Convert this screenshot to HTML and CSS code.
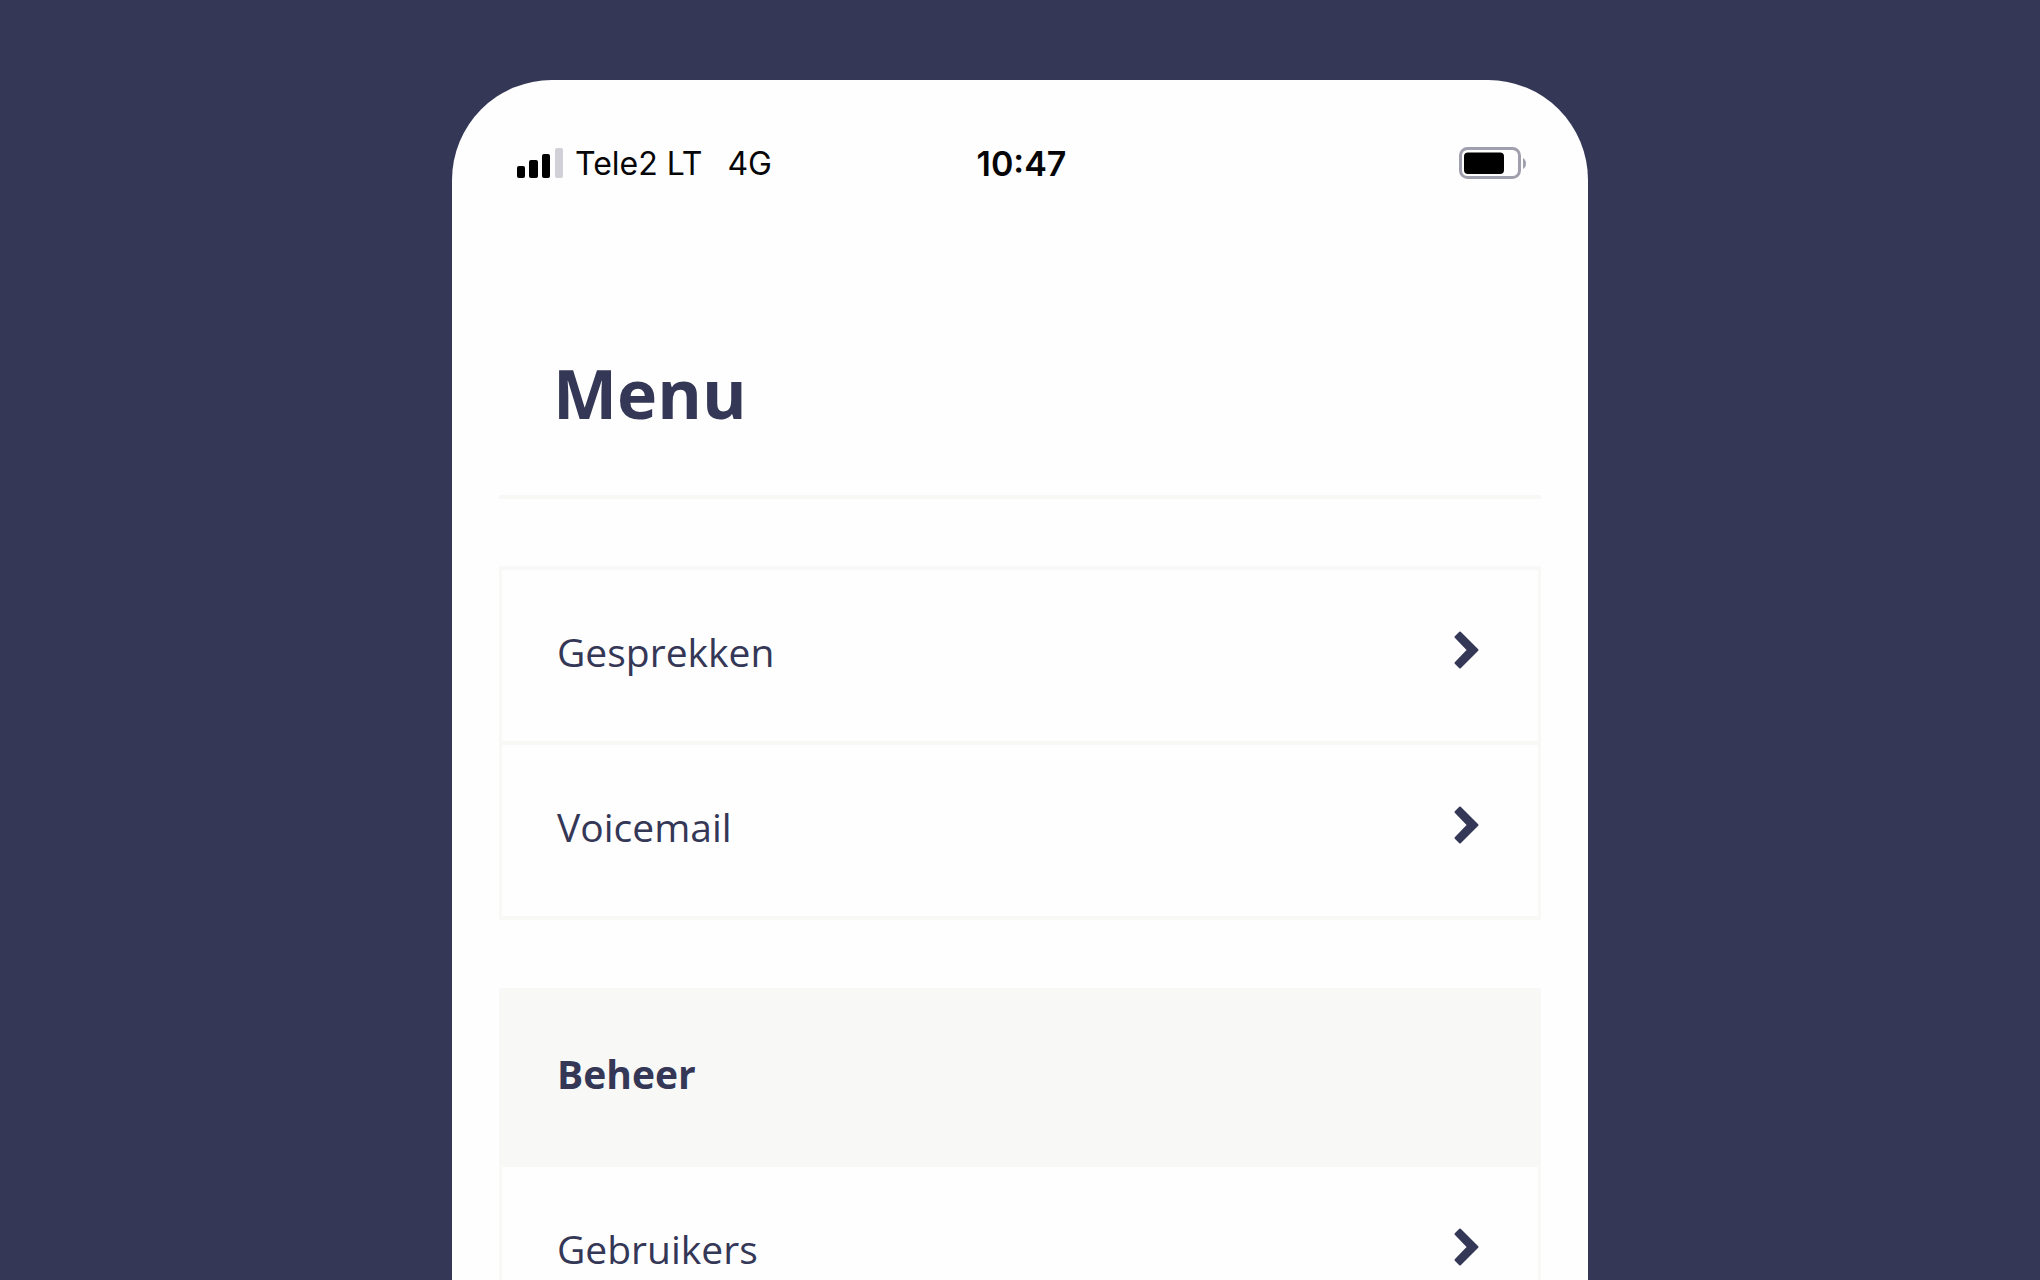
FILE: index.html
```
<!DOCTYPE html>
<html lang="nl">
<head>
  <meta charset="UTF-8">
  <meta name="viewport" content="width=device-width, initial-scale=1.0">
  <title>Menu</title>
  <link rel="stylesheet" href="styles.css">
</head>
<body>

<div class="phone">
    <div class="status-bar">
        <div class="carrier">
            <svg class="signal" width="46" height="30" viewBox="0 0 46 30">
                <rect x="0" y="18" width="8" height="12" rx="2"/>
                <rect x="12" y="12" width="9" height="18" rx="2"/>
                <rect x="25" y="6" width="8" height="24" rx="2"/>
                <rect class="signal-off" x="38" y="0" width="8" height="30" rx="2"/>
            </svg>
            <span>Tele2 LT</span>
            <span class="network">4G</span>
        </div>
        <div class="time">10:47</div>
        <svg class="battery" width="67" height="32" viewBox="0 0 67 32">
            <rect class="battery-case" x="1.5" y="1.5" width="59" height="29" rx="7"/>
            <rect x="5" y="5.5" width="40" height="21.5" rx="4"/>
            <path class="battery-tip" d="M64 11c4 2 4 9 0 11z"/>
        </svg>
    </div>

    <h1>Menu</h1>

    <nav>
        <ul class="menu">
            <li><a href="#gesprekken">Gesprekken
                <svg class="chevron" width="25" height="38" viewBox="0 0 25 38"><path d="M6 1.500L23.500 19 6 36.500 1.500 32 14 19 1.500 6z"/></svg></a></li>
            <li><a href="#voicemail">Voicemail
                <svg class="chevron" width="25" height="38" viewBox="0 0 25 38"><path d="M6 1.500L23.500 19 6 36.500 1.500 32 14 19 1.500 6z"/></svg></a></li>
        </ul>

        <ul class="menu">
            <li class="menu-title"><h2>Beheer</h2></li>
            <li><a href="#gebruikers">Gebruikers
                <svg class="chevron" width="25" height="38" viewBox="0 0 25 38"><path d="M6 1.500L23.500 19 6 36.500 1.500 32 14 19 1.500 6z"/></svg></a></li>
        </ul>
    </nav>
</div>

</body>
</html>
```
FILE: styles.css
```
* {
    box-sizing: border-box;
}

body {
    margin: 0;
    height: 100vh;
    padding: 80px 24px 0;
    overflow: hidden;
    background-color: #343756;
    color: #343756;
    font-family: "Open Sans", sans-serif;
}

.phone {
    max-width: 1136px;
    min-height: 100%;
    margin: 0 auto;
    padding: 60px 47px 0;
    border-radius: 100px 100px 0 0;
    background-color: #fefefe;
}

/* status bar */

.status-bar {
    display: grid;
    grid-template-columns: 1fr auto 1fr;
    align-items: center;
    padding: 0 15px 0 18px;
    color: #060608;
    font: 32px/48px Inter, sans-serif;
}

.carrier {
    display: flex;
    align-items: center;
    gap: 12px;
}

.signal, .battery {
    margin-bottom: 3px;
}

.network {
    margin-left: 13px;
}

.signal-off {
    fill: #d0d0d6;
}

.time {
    font-size: 34px;
    font-weight: 600;
}

.battery {
    justify-self: end;
}

.battery-case {
    fill: none;
    stroke: #a09fae;
    stroke-width: 3;
}

.battery-tip {
    fill: #a09fae;
}

/* menu */

h1 {
    margin: 165px 0 0;
    padding: 0 54px 62px;
    border-bottom: 4px solid #f8f8f7;
    font-size: 68px;
    line-height: 80px;
}

.menu {
    margin: 67px 0 0;
    padding: 0;
    border: solid #f8f8f7;
    border-width: 0 3px 4px;
    list-style: none;
}

.menu + .menu {
    margin-top: 68px;
}

.menu li {
    border-top: 4px solid #f8f8f7;
}

.menu a, .menu h2 {
    display: flex;
    align-items: center;
    justify-content: space-between;
    margin: 0;
    padding: 54px 59px 61px 55px;
    color: inherit;
    font-size: 39px;
    font-weight: 400;
    line-height: 56px;
    text-decoration: none;
}

.menu .menu-title {
    background-color: #f8f8f7;
}

.menu h2 {
    font-weight: 700;
}

.chevron {
    margin-bottom: 4px;
    fill: #343756;
    stroke: #343756;
    stroke-width: 2;
    stroke-linejoin: round;
}
```
